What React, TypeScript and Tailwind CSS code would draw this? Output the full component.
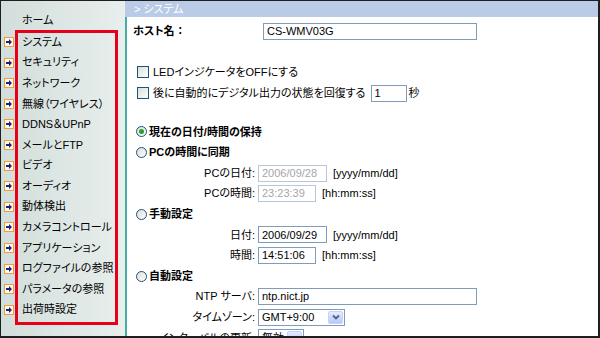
const font = "font-['Liberation_Sans','Noto_Sans_CJK_JP',sans-serif] [font-feature-settings:'palt']";

const menu = [
  'システム',
  'セキュリティ',
  'ネットワーク',
  '無線（ワイヤレス）',
  'DDNS＆UPnP',
  'メールとFTP',
  'ビデオ',
  'オーディオ',
  '動体検出',
  'カメラコントロール',
  'アプリケーション',
  'ログファイルの参照',
  'パラメータの参照',
  '出荷時設定',
];

function Arrow() {
  return (
    <svg width="10" height="10" viewBox="0 0 10 10" className="shrink-0">
      <rect x="0.5" y="0.5" width="9" height="9" fill="#fffaf0" stroke="#f39a3a" />
      <path d="M2 4h3V2l3 3-3 3V6H2z" fill="#1b2378" />
    </svg>
  );
}

function Check() {
  return <span className="inline-block w-[12px] h-[12px] shrink-0 border border-[#1c5180] bg-gradient-to-br from-[#dcdcd7] to-white" />;
}

function Radio({ on }: { on?: boolean }) {
  return (
    <span className="inline-flex w-[11px] h-[11px] shrink-0 rounded-full border border-[#1c5180] bg-gradient-to-br from-[#dcdcd7] to-white items-center justify-center">
      {on && <span className="w-[5px] h-[5px] rounded-full bg-[#2aa12a]" />}
    </span>
  );
}

function Input({ value, w, disabled }: { value: string; w: string; disabled?: boolean }) {
  return (
    <span
      className={
        'inline-flex items-center h-[17px] px-[3px] bg-white border text-[11px] ' +
        w +
        (disabled ? ' border-[#b7c6d9] text-[#a6a6a6]' : ' border-[#7f9db9] text-black')
      }
    >
      {value}
    </span>
  );
}

function Select({ value, w }: { value: string; w: string }) {
  return (
    <span className={'inline-flex items-center justify-between h-[17px] pl-[3px] pr-[1px] bg-white border border-[#7f9db9] text-[11px] ' + w}>
      <span>{value}</span>
      <span className="w-[15px] h-[13px] rounded-[2px] border border-[#c3d3fd] bg-gradient-to-b from-[#e3ebfe] to-[#b7cbf7] flex items-center justify-center">
        <svg width="8" height="6" viewBox="0 0 8 6">
          <path d="M1 1.5l3 3 3-3" stroke="#4d6185" strokeWidth="1.8" fill="none" />
        </svg>
      </span>
    </span>
  );
}

function Field({ label, children }: { label: string; children: React.ReactNode }) {
  return (
    <div className="flex items-center h-[20.6px]">
      <span className="w-[129px] text-right text-[11px] pr-[1px]">{label}</span>
      <span className="ml-[2px] flex items-center">{children}</span>
    </div>
  );
}

function Choice({ label, on }: { label: string; on?: boolean }) {
  return (
    <div className="flex items-center h-[20.6px] pl-[9px] gap-[2px]">
      <Radio on={on} />
      <span className="text-[11px] font-bold">{label}</span>
    </div>
  );
}

export default function App() {
  return (
    <div className={'relative w-[600px] h-[338px] overflow-hidden flex border-t border-l border-r-2 border-b-2 border-[#1e1e1e] bg-white text-black ' + font}>
      {/* Sidebar */}
      <div className="w-[124px] shrink-0 bg-gradient-to-r from-[#d2dedb] to-[#e8efed] pt-[9px]">
        <div className="h-[20px] flex items-center pl-[21px] text-[11px]">ホーム</div>
        <div className="mt-[1.7px]">
          {menu.map((m) => (
            <div key={m} className="h-[20.6px] flex items-center pl-[3px]">
              <Arrow />
              <span className="ml-[8px] text-[11px] whitespace-nowrap">{m}</span>
            </div>
          ))}
        </div>
      </div>

      {/* Main */}
      <div className="flex-1 flex flex-col min-w-0">
        <div className="h-[16px] shrink-0 bg-[#b9cbe6] text-white text-[11px] flex items-center pl-[9px]">&gt; システム</div>
        <div className="flex-1 border-l-2 border-[#46aca5] flex flex-col">
          <div className="mt-[4px] h-[21px] flex items-center pl-[6px]">
            <span className="w-[130px] text-[11px] font-bold">ホスト名 ：</span>
            <Input value="CS-WMV03G" w="w-[214px]" />
          </div>

          <div className="mt-[20px] h-[20.6px] flex items-center pl-[10px] gap-[4px]">
            <Check />
            <span className="text-[11px]">LEDインジケータをOFFにする</span>
          </div>
          <div className="h-[21px] flex items-center pl-[10px] gap-[4px]">
            <Check />
            <span className="text-[11px]">後に自動的にデジタル出力の状態を回復する</span>
            <Input value="1" w="w-[36px] ml-[1px]" />
            <span className="text-[11px] -ml-[2px]">秒</span>
          </div>

          <div className="mt-[18px]">
            <Choice label="現在の日付/時間の保持" on />
            <Choice label="PCの時間に同期" />
            <Field label="PCの日付:">
              <Input value="2006/09/28" w="w-[69px]" disabled />
              <span className="ml-[6px] text-[11px]">[yyyy/mm/dd]</span>
            </Field>
            <Field label="PCの時間:">
              <Input value="23:23:39" w="w-[58px]" disabled />
              <span className="ml-[6px] text-[11px]">[hh:mm:ss]</span>
            </Field>
            <Choice label="手動設定" />
            <Field label="日付:">
              <Input value="2006/09/29" w="w-[69px]" />
              <span className="ml-[6px] text-[11px]">[yyyy/mm/dd]</span>
            </Field>
            <Field label="時間:">
              <Input value="14:51:06" w="w-[58px]" />
              <span className="ml-[6px] text-[11px]">[hh:mm:ss]</span>
            </Field>
            <Choice label="自動設定" />
            <Field label="NTP サーバ:">
              <Input value="ntp.nict.jp" w="w-[219px]" />
            </Field>
            <Field label="タイムゾーン:">
              <Select value="GMT+9:00" w="w-[87px]" />
            </Field>
            <Field label="インターバルの更新:">
              <Select value="無効" w="w-[46px]" />
            </Field>
          </div>
        </div>
      </div>

      {/* annotation frame */}
      <div className="absolute left-[14px] top-[29px] w-[103px] h-[295px] border-[3px] border-[#e60019] pointer-events-none" />
    </div>
  );
}
